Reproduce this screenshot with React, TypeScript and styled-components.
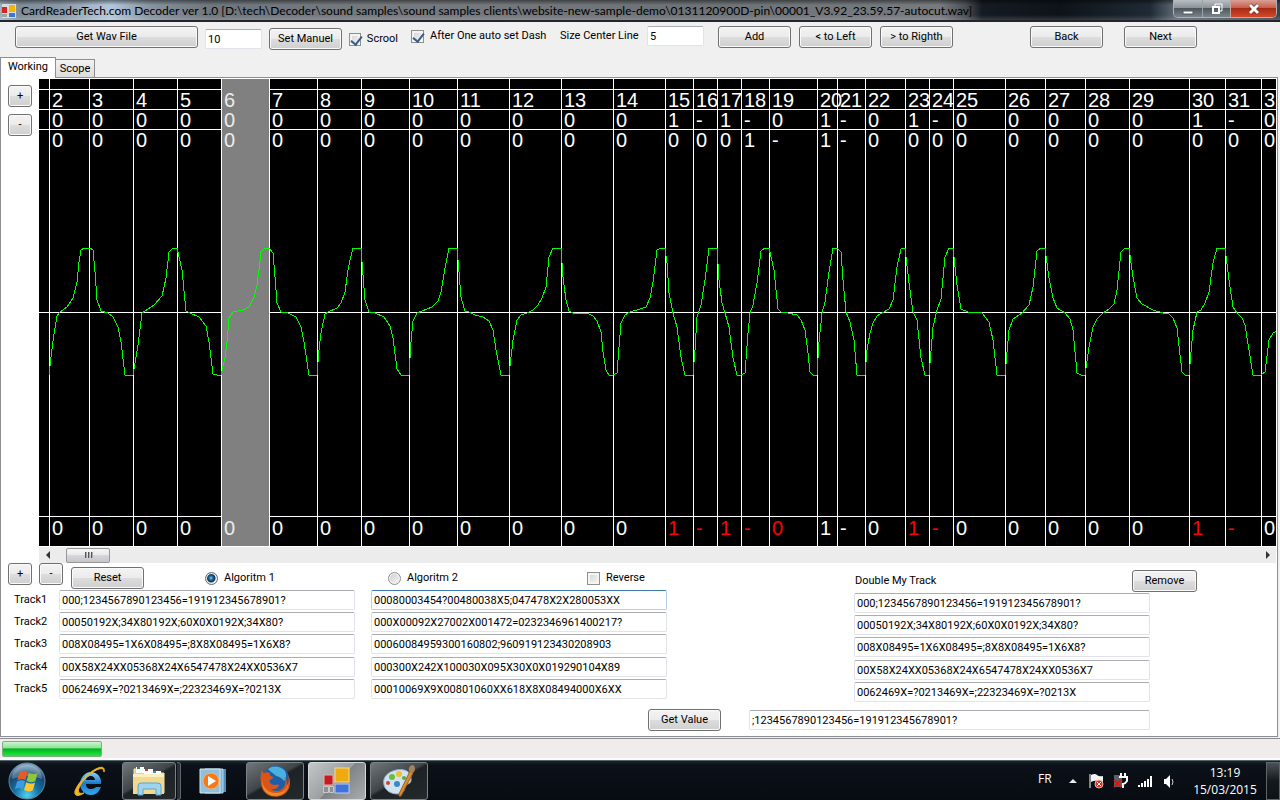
import React, { useState } from "react";
import styled, { createGlobalStyle, css } from "styled-components";

const GlobalStyle = createGlobalStyle`
  * { box-sizing: border-box; }
  body {
    margin: 0;
    background: #f0f0f0;
    color: #000;
    font: 11px/14px Roboto, "Liberation Sans", sans-serif;
  }
  button, input { font: inherit; color: inherit; margin: 0; }
`;

const Desktop = styled.div`
  display: flex;
  flex-direction: column;
  min-height: 100vh;
  overflow: hidden;
`;

/* ---------- title bar ---------- */

const TitleBar = styled.header`
  display: flex;
  align-items: flex-start;
  height: 22px;
  padding: 0 3px 0 2px;
  border-bottom: 2px solid #22262c;
  background:
    linear-gradient(180deg, rgba(0, 0, 0, 0.45) 0, rgba(0, 0, 0, 0) 5px, rgba(0, 0, 0, 0) 15px, rgba(255, 255, 255, 0.15) 20px),
    linear-gradient(90deg, #9fb2c4 0, #7f8c98 20px, #8b99a6 60px, #b4c8dc 110px, #8793a0 150px, #6f767d 210px, #767a7e 420px, #6d7276 700px, #777b7f 940px, #4a4f54 966px, #151b22 982px, #0d1319 1060px, #1f2a35 1150px, #5c6872 1175px, #39434c 100%);
`;

const AppIcon = styled.svg`
  flex: none;
  margin-top: 4px;
`;

const Title = styled.h1`
  flex: 1;
  margin: 0;
  padding: 2px 0 0 5px;
  overflow: hidden;
  white-space: nowrap;
  font: 400 12px/17px Lato, sans-serif;
`;

const Captions = styled.div`
  display: flex;
  height: 18px;
  border: 1px solid #aab2b8;
  border-top: 0;
  border-radius: 0 0 5px 5px;
  overflow: hidden;
`;

const CaptionButton = styled.button<{ $close?: boolean }>`
  display: grid;
  place-items: center;
  width: ${(p) => (p.$close ? 46 : 28)}px;
  padding: 0;
  border: 0;
  border-left: ${(p) => (p.$close ? "1px solid #c9a39c" : "1px solid #9aa2a8")};
  background: ${(p) =>
    p.$close
      ? "linear-gradient(180deg, #d9a096 0, #c5604e 45%, #a82a15 50%, #d4492a 100%)"
      : "linear-gradient(180deg, #b9bec2 0, #8c9399 45%, #50585f 50%, #7b848b 100%)"};
  &:first-child { border-left: 0; }
`;

/* ---------- shared controls ---------- */

const Button = styled.button<{ $w: number }>`
  flex: none;
  width: ${(p) => p.$w}px;
  height: 22px;
  padding: 0;
  border: 1px solid #707070;
  border-radius: 3px;
  background: linear-gradient(180deg, #f3f3f3 0, #ebebeb 50%, #dddddd 50%, #cfcfcf 100%);
  box-shadow: inset 0 0 0 1px #fafafa;
  white-space: nowrap;
`;

const TextBox = styled.input<{ $w: number; $focus?: boolean }>`
  flex: none;
  width: ${(p) => p.$w}px;
  height: 20px;
  padding: 0 2px;
  border: 1px solid #e2e3ea;
  border-top-color: #abadb3;
  border-radius: 2px;
  outline: 0;
  background: #fff;
  ${(p) =>
    p.$focus &&
    css`
      border-color: #b5cfe7;
      border-top-color: #3d7bad;
    `}
`;

const Choice = styled.label<{ $w?: number }>`
  display: flex;
  align-items: center;
  gap: 6px;
  width: ${(p) => (p.$w ? `${p.$w}px` : "auto")};
  white-space: nowrap;
`;

const CheckBox = styled.input.attrs({ type: "checkbox" })`
  appearance: none;
  position: relative;
  width: 13px;
  height: 13px;
  border: 1px solid #8e8f8f;
  background: linear-gradient(135deg, #cfd3d6, #f6f6f6);
  box-shadow: inset 0 0 0 2px #f4f4f4;
  &:checked::after {
    content: "";
    position: absolute;
    left: 3px;
    top: 0;
    width: 5px;
    height: 9px;
    border: solid #3b5c86;
    border-width: 0 2px 2px 0;
    transform: rotate(38deg);
  }
`;

const Radio = styled.input.attrs({ type: "radio" })`
  appearance: none;
  width: 13px;
  height: 13px;
  border: 1px solid #8e8f8f;
  border-radius: 50%;
  background: linear-gradient(135deg, #c9cdd0, #f6f6f6);
  box-shadow: inset 0 0 0 1px #f4f4f4;
  &:checked {
    border-color: #5f6a74;
    background: radial-gradient(circle at 5px 5px, #7fd0f0 0, #1b6a9c 2px, #0d3250 4px, #dfe6ea 5px);
  }
`;

/* ---------- toolbar ---------- */

const Toolbar = styled.div`
  display: flex;
  align-items: flex-start;
  height: 35px;
  padding: 4px 83px 0 15px;
`;

const ToolGroup = styled.div<{ $gap: number; $left?: number; $low?: boolean }>`
  display: flex;
  align-items: center;
  gap: ${(p) => p.$gap}px;
  margin-left: ${(p) => p.$left ?? 0}px;
  padding-top: ${(p) => (p.$low ? 2 : 0)}px;
`;

const Nav = styled(ToolGroup)`
  margin-left: auto;
`;

const Labelled = styled.label`
  display: grid;
  grid-template-columns: 87px auto;
  align-items: center;
  white-space: nowrap;
`;

/* ---------- tabs ---------- */

const TabStrip = styled.div`
  display: flex;
  align-items: flex-end;
  height: 20px;
`;

const Tab = styled.button<{ $active?: boolean }>`
  position: relative;
  height: ${(p) => (p.$active ? 21 : 18)}px;
  width: ${(p) => (p.$active ? 56 : 39)}px;
  padding: ${(p) => (p.$active ? "0 0 2px" : "1px 0 0")};
  margin-bottom: ${(p) => (p.$active ? -1 : 0)}px;
  border: 1px solid #8c8e94;
  border-bottom: 0;
  border-left-width: ${(p) => (p.$active ? 1 : 0)}px;
  background: ${(p) => (p.$active ? "#fff" : "linear-gradient(180deg, #f2f2f2, #dcdcdc)")};
  z-index: ${(p) => (p.$active ? 1 : 0)};
`;

const TabPage = styled.main`
  flex: 1;
  display: flex;
  flex-direction: column;
  margin-right: 2px;
  border: 1px solid #8c8e94;
  background: #fff;
`;

const ScopeArea = styled.section`
  display: flex;
  height: 485px;
`;

const ZoomColumn = styled.div`
  flex: none;
  display: flex;
  flex-direction: column;
  gap: 7px;
  width: 38px;
  padding: 7px 0 0 7px;
`;

const Viewport = styled.div`
  flex: 1;
  min-width: 0;
  padding: 1px 1px 0 0;
`;

const Trace = styled.svg`
  display: block;
  width: 100%;
  height: 468px;
  background: #000;
  font: 20px "Liberation Sans", Arial, sans-serif;
  fill: #fff;
`;

const ScrollBar = styled.div`
  display: flex;
  align-items: center;
  height: 16px;
  background: #ececec;
`;

const ScrollArrow = styled.button`
  display: grid;
  place-items: center;
  width: 17px;
  height: 15px;
  padding: 0;
  border: 0;
  background: transparent;
`;

const ScrollTrack = styled.div`
  flex: 1;
  padding-left: 10px;
`;

const Thumb = styled.div`
  display: flex;
  align-items: center;
  justify-content: center;
  gap: 2px;
  width: 44px;
  height: 15px;
  border: 1px solid #979797;
  border-radius: 2px;
  background: linear-gradient(180deg, #f5f5f5 0, #e9e9eb 50%, #d6d7da 50%, #c5c6c9 100%);
  i { width: 1px; height: 6px; background: #555; box-shadow: 1px 0 #aaa; }
`;

/* ---------- decoded tracks ---------- */

const Results = styled.section`
  display: flex;
`;

const LeftPane = styled.div`
  flex: 1;
  padding-left: 7px;
`;

const RightPane = styled.div`
  flex: none;
  width: 423px;
`;

const Controls = styled.div`
  display: flex;
  height: 27px;
  align-items: flex-start;
`;

const ZoomPair = styled.div`
  display: flex;
  gap: 7px;
  width: 63px;
`;

const Slot = styled.div<{ $w: number }>`
  display: flex;
  align-items: center;
  width: ${(p) => p.$w}px;
  height: 30px;
`;

const TrackGrid = styled.div`
  display: grid;
  grid-template-columns: 45px 296px 296px;
  grid-template-rows: 20px 20px 20px 21px 20px;
  row-gap: 2px;
  align-items: end;
  padding-left: 6px;
  > label { align-self: center; }
  > :nth-child(3n) { margin-left: 16px; }
`;

const DoubleHead = styled.div`
  display: flex;
  justify-content: space-between;
  align-items: center;
  height: 30px;
  padding: 6px 80px 0 1px;
`;

const DoubleList = styled.div`
  display: grid;
  grid-template-rows: 20px 20px 20px 21px 20px;
  row-gap: 2px;
  align-items: end;
`;

const ValueRow = styled.form`
  display: flex;
  justify-content: flex-end;
  align-items: center;
  gap: 28px;
  margin-top: 7px;
  padding: 0 127px 5px 0;
`;

const StatusBar = styled.footer`
  height: 22px;
  margin-top: 1px;
  padding: 2px;
  border-top: 1px solid #8c8e94;
  border-bottom: 2px solid #fafafa;
  background: #f0eceb;
`;

const Progress = styled.div`
  width: 100px;
  height: 16px;
  border: 1px solid #7fae86;
  border-radius: 2px;
  background: linear-gradient(180deg, #c9f5cf 0, #8fe59a 40%, #06b125 50%, #0dd22b 75%, #2fdf4c 100%);
`;

/* ---------- taskbar ---------- */

const Taskbar = styled.nav`
  display: flex;
  align-items: center;
  height: 40px;
  padding-left: 5px;
  border-top: 1px solid #55636a;
  background: linear-gradient(180deg, #1b242c 0, #0b1118 4px, #080c12 100%);
  color: #fff;
  font: 12px/17px "Open Sans", sans-serif;
`;

const TaskItem = styled.button<{ $w: number; $left: number; $look?: "open" | "active" }>`
  display: grid;
  place-items: center;
  width: ${(p) => p.$w}px;
  height: 38px;
  margin-left: ${(p) => p.$left}px;
  padding: 0;
  border: 0;
  background: transparent;
  ${(p) =>
    p.$look &&
    css`
      border: 1px solid ${p.$look === "active" ? "#d5d8da" : "#7c8387"};
      border-radius: 3px;
      background: ${p.$look === "active"
        ? "linear-gradient(135deg, #c4c7c8 0, #9b9fa1 50%, #7e8385 51%, #a9acae 100%)"
        : "linear-gradient(150deg, #70767a 0, #3f4549 45%, #1c2225 50%, #24292c 100%)"};
    `}
`;

const Stack = styled.div`
  width: 4px;
  height: 38px;
  margin-left: 1px;
  border: 1px solid #5f6568;
  border-left: 0;
  border-radius: 0 3px 3px 0;
  background: #2a2f33;
`;

const Tray = styled.div`
  display: flex;
  align-items: center;
  margin-left: auto;
`;

const Lang = styled.span`
  width: 30px;
  padding-bottom: 4px;
`;

const TrayIcons = styled.svg`
  display: block;
`;

const Clock = styled.time`
  width: 82px;
  text-align: center;
`;

const ShowDesktop = styled.button`
  width: 14px;
  height: 38px;
  padding: 0;
  border: 1px solid #5e666b;
  background: linear-gradient(180deg, #4a5055, #14191d 50%, #0d1216);
`;

/* ---------- data ---------- */

type Cell = { x: number; n: number; a: string; b: string; out: string; hot?: boolean };

const xs = [10, 50, 94, 138, 182, 230, 278, 322, 370, 418, 470, 522, 574, 626, 654, 678, 702, 730, 778, 798, 826, 866, 890, 914, 966, 1006, 1046, 1090, 1150, 1186, 1222];
const rowA = "00000000000001-1-01-01-000001-0";
const rowB = "00000000000000001-1-00000000000";
const hotColumns = [15, 16, 17, 18, 19, 23, 24, 30, 31];

const cells: Cell[] = xs.map((x, i) => ({
  x,
  n: i + 2,
  a: rowA[i],
  b: rowB[i],
  out: rowA[i],
  hot: hotColumns.includes(i + 2),
}));

const selected = 6;

const wave =
  "49,375 52,349 54,334 57,316 60,312 67,307 73,298 77,282 79,262 81,250 84,248 90,248 93,250 95,272 97,300 101,311 108,313 113,317 118,327 121,342 125,375 133,375 138,345 142,313 145,311 154,305 162,296 166,278 169,252 173,248 177,248 182,270 186,311 190,313 199,317 206,326 209,342 213,374 217,375 221,375 225,358 227,342 229,318 233,312 243,310 249,307 254,297 257,285 259,270 261,252 265,248 269,248 273,253 275,277 277,303 281,312 288,313 296,317 301,327 304,342 309,375 317,375 319,350 321,333 325,314 328,312 337,308 341,303 345,292 348,270 350,260 353,248 361,248 363,275 365,300 369,312 375,313 384,317 390,326 393,338 397,369 401,375 409,375 411,342 413,321 417,313 432,307 438,301 441,292 445,268 449,248 457,248 459,272 461,297 465,311 469,312 475,315 483,317 489,321 493,330 496,350 501,375 509,375 513,340 517,320 521,315 527,313 533,310 538,305 542,298 546,287 549,257 553,248 561,248 563,277 566,300 569,311 573,313 587,313 593,316 597,321 601,332 603,352 606,370 609,375 613,375 617,373 619,347 621,323 625,315 630,312 640,309 646,307 650,298 653,282 657,250 661,248 665,248 667,263 669,293 673,313 677,327 681,357 685,375 693,375 695,350 697,317 701,305 705,280 709,248 717,248 719,280 722,303 725,313 729,327 733,358 737,375 741,375 745,373 748,333 750,313 753,305 757,283 761,251 765,248 769,248 774,270 778,309 781,312 788,313 797,315 801,320 805,330 808,353 810,372 813,375 817,375 819,342 822,313 825,302 829,272 833,248 837,248 841,252 843,280 846,312 850,322 854,340 857,375 865,375 867,350 870,333 873,323 877,316 882,313 889,309 893,300 897,267 901,249 905,248 909,283 913,312 917,320 921,358 925,375 929,375 933,327 937,310 941,299 945,257 949,248 953,248 957,285 961,309 968,312 982,313 989,322 993,340 997,375 1005,375 1009,330 1013,319 1022,313 1029,305 1033,287 1037,251 1041,248 1045,248 1049,278 1053,298 1057,308 1065,313 1070,319 1073,330 1077,373 1081,375 1085,375 1089,347 1093,327 1097,319 1103,313 1109,309 1114,304 1117,290 1121,252 1125,248 1129,248 1133,277 1137,298 1142,304 1153,310 1163,313 1169,314 1173,318 1177,328 1182,372 1185,375 1189,375 1193,330 1197,312 1201,310 1205,303 1209,292 1213,263 1217,248 1225,248 1229,280 1233,307 1237,313 1242,318 1245,325 1249,350 1253,375 1261,375 1265,372 1269,340 1273,333 1277,331";

const algo1 = [
  "000;1234567890123456=191912345678901?",
  "00050192X;34X80192X;60X0X0192X;34X80?",
  "008X08495=1X6X08495=;8X8X08495=1X6X8?",
  "00X58X24XX05368X24X6547478X24XX0536X7",
  "0062469X=?0213469X=;22323469X=?0213X",
];

const algo2 = [
  "00080003454?00480038X5;047478X2X280053XX",
  "000X00092X27002X001472=0232346961400217?",
  "00060084959300160802;960919123430208903",
  "000300X242X100030X095X30X0X019290104X89",
  "00010069X9X00801060XX618X8X08494000X6XX",
];

/* ---------- pieces ---------- */

function Waveform() {
  return (
    <Trace role="img" aria-label="Waveform">
      <g shapeRendering="crispEdges">
        {[10, 30, 50, 233, 437, 467].map((y) => (
          <rect key={y} x="0" y={y} width="100%" height="1" />
        ))}
        {cells.map((c) => (
          <rect key={c.n} x={c.x} y="0" width="1" height="468" />
        ))}
        <rect x="183" y="0" width="47" height="467" fill="#808080" />
        <polyline points={wave} transform="translate(-39 -79)" fill="none" stroke="#00ff00" />
      </g>
      {cells.map((c) => (
        <g key={c.n} fill={c.n === selected ? "#ececec" : "#fff"}>
          <text x={c.x + 3} y="28">{c.n}</text>
          <text x={c.x + 3} y="48">{c.a}</text>
          <text x={c.x + 3} y="68">{c.b}</text>
          <text x={c.x + 3} y="456" fill={c.hot ? "#f00" : undefined}>{c.out}</text>
        </g>
      ))}
    </Trace>
  );
}

function FormsIcon({ size }: { size: number }) {
  return (
    <svg width={size} height={size} viewBox="0 0 28 28" aria-hidden="true">
      <path d="M.5 19.500h5v6h-5zM6.500 19.500h4v6h-4z" fill="#8d9092" stroke="#c6c9cb" />
      <rect x="1" y="8" width="9" height="10" fill="#c41d20" stroke="#eab0a8" />
      <rect x="12" y="1" width="14" height="14" fill="#eeaa10" stroke="#f8dc8a" />
      <rect x="12" y="17" width="14" height="9" fill="#3f73d8" stroke="#b7cdf5" />
    </svg>
  );
}

function SmallFormsIcon() {
  return (
    <AppIcon width="14" height="14" viewBox="0 0 14 14" aria-hidden="true">
      <rect width="14" height="14" fill="#d8dcdf" />
      <rect x="0" y="3" width="5" height="6" fill="#d0281e" />
      <rect x="7" y="1" width="6" height="7" fill="#f5b400" />
      <rect x="7" y="9" width="6" height="4" fill="#3a78dc" />
      <path d="M0 10h5v3H0z" fill="#9ea3a7" />
    </AppIcon>
  );
}

function StartOrb() {
  return (
    <svg width="38" height="38" viewBox="0 0 38 38" aria-hidden="true">
      <defs>
        <radialGradient id="orb" cx="50%" cy="90%" r="85%">
          <stop offset="0" stopColor="#4fd4f2" />
          <stop offset=".4" stopColor="#1572a8" />
          <stop offset=".75" stopColor="#17466f" />
          <stop offset="1" stopColor="#7fa3bd" />
        </radialGradient>
      </defs>
      <circle cx="19" cy="19" r="18" fill="url(#orb)" stroke="#64869c" />
      <path d="M4 17C4 8 11 3 19 3s15 5 15 14c-9-4-20-4-30 0z" fill="#fff" opacity=".25" />
      <path d="M11.500 10.500c3-2 5.500-2 8-.5l-2.200 8c-2.500-1.500-5.300-1.500-8 .3z" fill="#ea5a24" />
      <path d="M20.800 10.700c3 1.800 6 1.800 8.800.2l-2.200 8c-2.800 1.700-5.800 1.700-8.800-.2z" fill="#8fc43c" />
      <path d="M9 19.700c2.800-1.800 5.500-1.800 8-.3l-2.200 7.800c-2.400-1.600-5.200-1.600-8 .2z" fill="#3f9be0" />
      <path d="M18.200 20.200c3 1.800 6 1.800 8.900.2l-2.200 7.800c-2.900 1.700-5.900 1.700-8.900-.2z" fill="#fbc72c" />
    </svg>
  );
}

function ExplorerE() {
  return (
    <svg width="34" height="34" viewBox="0 0 34 34" aria-hidden="true">
      <defs>
        <linearGradient id="ie" x1="0" y1="0" x2="0" y2="1">
          <stop offset="0" stopColor="#8bd5fa" />
          <stop offset=".5" stopColor="#1c78cc" />
          <stop offset="1" stopColor="#3aa7ee" />
        </linearGradient>
      </defs>
      <path d="M29 20H14c0 3 2 5 5 5 2 0 4-1 5-2h5c-2 5-5 8-10 8-6 0-11-5-11-11S13 8 19 8s11 5 10 12zM14 16h9c0-2-2-4-4-4s-5 2-5 4z" fill="url(#ie)" />
      <path d="M32 8c1-4-1-6-6-4C18 7 6 18 3 27c-1 5 3 6 9 2C8 30 5 29 7 24 10 16 20 7 27 5c3-1 5 0 5 3z" fill="#f0b323" stroke="#f0b323" />
    </svg>
  );
}

function FolderIcon() {
  return (
    <svg width="34" height="32" viewBox="0 0 34 32" aria-hidden="true">
      <path d="M2 4h8l2 2h8l2 2h10v20H2z" fill="#e7cf7a" stroke="#f7ebb4" />
      <path d="M4 2h8v6H4z" fill="#fff" /><path d="M5 2h3v2H5z" fill="#1c9b3c" />
      <path d="M12 4h9v6h-9z" fill="#fff" /><path d="M13 4h3v2h-3z" fill="#d63a24" />
      <path d="M20 6h9v6h-9z" fill="#fff" /><path d="M21 6h3v2h-3z" fill="#2497e0" />
      <path d="M1 9h31v20H1z" fill="#f0da90" />
      <path d="M1 9h31v3H1z" fill="#fbefc0" />
      <path d="M6 30V21q0-3 3-3h17q3 0 3 3v9h-5v-6H11v6z" fill="#9fd3ee" stroke="#5ca6cf" />
    </svg>
  );
}

function PlayerIcon() {
  return (
    <svg width="28" height="28" viewBox="0 0 28 28" aria-hidden="true">
      <path d="M9 2h18v23H9z" fill="#4d8fb8" /><path d="M6 2h18v24H6z" fill="#7fb4d6" stroke="#b7d9ec" />
      <path d="M1 2h20v24H1z" fill="#8fc1de" stroke="#cfe7f4" />
      <circle cx="12" cy="14" r="8" fill="#f27a1a" stroke="#fbb26a" />
      <path d="M9 9l8 5-8 5z" fill="#fff" />
    </svg>
  );
}

function FirefoxIcon() {
  return (
    <svg width="32" height="32" viewBox="0 0 32 32" aria-hidden="true">
      <circle cx="17" cy="14" r="13" fill="#1d5ea8" />
      <path d="M9 4c5-4 13-3 17 2 2 4 1 8-1 10-3-5-8-4-10-7-2-1-4-3-6-5z" fill="#4ab0dd" />
      <path d="M3 4c0 2 1 4 2 4 2-1 4-1 6 0-1 2 0 3 3 4 1 1-1 2-3 3-1 1 0 5 4 5 2 0 4-1 5 0-1 4-5 5-8 4 4 4 12 2 14-4 1-3 0-6-1-8 3 2 3 5 3 8 2-3 2-6 1-10 4 7 2 16-5 20-8 4-18 1-21-7C1 17 1 11 3 4z" fill="#d9541a" />
      <path d="M3 14c0 8 6 14 14 14 6 0 11-3 12-9 1 6-6 12-13 12C8 31 2 24 3 14z" fill="#f08a24" />
    </svg>
  );
}

function PaintIcon() {
  return (
    <svg width="34" height="34" viewBox="0 0 34 34" aria-hidden="true">
      <path d="M14 6c9-2 16 2 15 10 0 4-4 4-6 5-3 1 1 4-2 7-4 4-17 2-19-7C0 13 6 8 14 6z" fill="#cfe3f0" stroke="#8fb0c6" />
      <circle cx="10" cy="13" r="3" fill="#6dbb3a" /><circle cx="17" cy="10" r="3" fill="#f0bf2c" />
      <circle cx="6" cy="19" r="2" fill="#d9402c" /><circle cx="15" cy="20" r="3" fill="#3f86c8" />
      <circle cx="22" cy="14" r="2" fill="#58a94c" />
      <path d="M28 7l3 2-12 23q-3 1-2-2z" fill="#d98a35" stroke="#a35f1c" />
      <path d="M27 7c-1-3 1-6 4-6 2 1 3 5 0 8z" fill="#a5835a" />
    </svg>
  );
}

function TrayGlyphs() {
  return (
    <TrayIcons width="116" height="20" viewBox="0 0 116 20" aria-hidden="true">
      <path d="M1 12h8l-4-4z" fill="#e8ecee" />
      <path d="M22 3v14" stroke="#fff" />
      <path d="M23 4q4-2 6 0t6 1v6q-4 0-6-1t-6 1z" fill="#f4f4f4" />
      <circle cx="31" cy="13" r="4" fill="#d9341f" stroke="#f3b0a6" />
      <path d="M29 11l4 4m0-4l-4 4" stroke="#fff" />
      <path d="M46 4h8v12h-8z" fill="#5b6165" />
      <path d="M53 2v4m4-4v4m-6 0h8v4q-2 3-4 3v4" stroke="#fff" strokeWidth="2" fill="none" />
      <path d="M46 9l7 7m0-7l-7 7" stroke="#e01212" strokeWidth="2" />
      <path d="M70 14h2v2h-2zM73 12h2v4h-2zM76 10h2v6h-2zM79 8h2v8h-2zM82 5h2v11h-2z" fill="#fff" />
      <path d="M96 8h2l4-4v13l-4-4h-2z" fill="#fff" />
      <path d="M104 8q2 3 0 6" stroke="#ccd" fill="none" />
    </TrayIcons>
  );
}

export default function App() {
  const [algorithm, setAlgorithm] = useState(1);
  return (
    <Desktop>
      <GlobalStyle />
      <TitleBar>
        <SmallFormsIcon />
        <Title>
          CardReaderTech.com Decoder ver 1.0 [D:\tech\Decoder\sound samples\sound samples clients\website-new-sample-demo\0131120900D-pin\00001_V3.92_23.59.57-autocut.wav]
        </Title>
        <Captions>
          <CaptionButton aria-label="Minimize">
            <svg width="12" height="14"><rect x="1" y="9" width="10" height="3" fill="#fff" stroke="#555b60" strokeWidth="1" /></svg>
          </CaptionButton>
          <CaptionButton aria-label="Restore">
            <svg width="12" height="14" fill="none" stroke="#fff" strokeWidth="2"><path d="M4 4V2h7v7H9" strokeWidth="1" /><rect x="2" y="5" width="6" height="6" /></svg>
          </CaptionButton>
          <CaptionButton $close aria-label="Close">
            <svg width="12" height="12"><path d="M2 2l8 8m0-8l-8 8" stroke="#5b2018" strokeWidth="4" /><path d="M2 2l8 8m0-8l-8 8" stroke="#fff" strokeWidth="3" /></svg>
          </CaptionButton>
        </Captions>
      </TitleBar>

      <Toolbar>
        <Button $w={183}>Get Wav File</Button>
        <ToolGroup $gap={7} $left={7} $low>
          <TextBox $w={57} defaultValue="10" aria-label="Manual value" />
          <Button $w={73}>Set Manuel</Button>
          <Choice $w={49}><CheckBox defaultChecked />Scrool</Choice>
        </ToolGroup>
        <ToolGroup $gap={0} $left={13}>
          <Choice $w={149}><CheckBox defaultChecked />After One auto set Dash</Choice>
          <Labelled>Size Center Line<TextBox $w={57} defaultValue="5" /></Labelled>
        </ToolGroup>
        <ToolGroup $gap={8} $left={14}>
          <Button $w={73}>Add</Button>
          <Button $w={73}>&lt; to Left</Button>
          <Button $w={73}>&gt; to Righth</Button>
        </ToolGroup>
        <Nav $gap={21}>
          <Button $w={73}>Back</Button>
          <Button $w={73}>Next</Button>
        </Nav>
      </Toolbar>

      <TabStrip role="tablist">
        <Tab role="tab" aria-selected $active>Working</Tab>
        <Tab role="tab" aria-selected={false}>Scope</Tab>
      </TabStrip>

      <TabPage>
        <ScopeArea>
          <ZoomColumn>
            <Button $w={24}>+</Button>
            <Button $w={24}>-</Button>
          </ZoomColumn>
          <Viewport>
            <Waveform />
            <ScrollBar>
              <ScrollArrow aria-label="Scroll left"><svg width="4" height="8"><path d="M4 0v8L0 4z" fill="#333" /></svg></ScrollArrow>
              <ScrollTrack><Thumb><i /><i /><i /></Thumb></ScrollTrack>
              <ScrollArrow aria-label="Scroll right"><svg width="4" height="8"><path d="M0 0v8l4-4z" fill="#333" /></svg></ScrollArrow>
            </ScrollBar>
          </Viewport>
        </ScopeArea>

        <Results>
          <LeftPane>
            <Controls>
              <ZoomPair>
                <Button $w={24}>+</Button>
                <Button $w={24}>-</Button>
              </ZoomPair>
              <Slot $w={134}><Button $w={73}>Reset</Button></Slot>
              <Slot $w={183}>
                <Choice><Radio name="algorithm" checked={algorithm === 1} onChange={() => setAlgorithm(1)} />Algoritm 1</Choice>
              </Slot>
              <Slot $w={199}>
                <Choice><Radio name="algorithm" checked={algorithm === 2} onChange={() => setAlgorithm(2)} />Algoritm 2</Choice>
              </Slot>
              <Slot $w={80}>
                <Choice><CheckBox />Reverse</Choice>
              </Slot>
            </Controls>
            <TrackGrid>
              {algo1.map((value, i) => (
                <React.Fragment key={value}>
                  <label htmlFor={`track${i + 1}`}>Track{i + 1}</label>
                  <TextBox id={`track${i + 1}`} $w={296} defaultValue={value} />
                  <TextBox $w={296} $focus={i === 0} defaultValue={algo2[i]} aria-label={`Track${i + 1}, second algorithm`} />
                </React.Fragment>
              ))}
            </TrackGrid>
          </LeftPane>
          <RightPane>
            <DoubleHead>
              <span>Double My Track</span>
              <Button $w={65}>Remove</Button>
            </DoubleHead>
            <DoubleList>
              {algo1.map((value, i) => (
                <TextBox key={value} $w={296} defaultValue={value} aria-label={`Double track ${i + 1}`} />
              ))}
            </DoubleList>
          </RightPane>
        </Results>
        <ValueRow onSubmit={(e) => e.preventDefault()}>
          <Button $w={73}>Get Value</Button>
          <TextBox $w={401} defaultValue=";1234567890123456=191912345678901?" aria-label="Value" />
        </ValueRow>
      </TabPage>

      <StatusBar>
        <Progress role="progressbar" aria-label="Decoding" aria-valuenow={100} />
      </StatusBar>

      <Taskbar>
        <TaskItem $w={44} $left={0} aria-label="Start"><StartOrb /></TaskItem>
        <TaskItem $w={48} $left={16} aria-label="Internet Explorer"><ExplorerE /></TaskItem>
        <TaskItem $w={54} $left={9} $look="open" aria-label="Explorer"><FolderIcon /></TaskItem>
        <Stack />
        <TaskItem $w={48} $left={8} aria-label="Media Player"><PlayerIcon /></TaskItem>
        <TaskItem $w={58} $left={9} $look="open" aria-label="Firefox"><FirefoxIcon /></TaskItem>
        <TaskItem $w={58} $left={4} $look="active" aria-label="Decoder"><FormsIcon size={28} /></TaskItem>
        <TaskItem $w={58} $left={4} $look="open" aria-label="Paint"><PaintIcon /></TaskItem>
        <Tray>
          <Lang>FR</Lang>
          <TrayGlyphs />
          <Clock>13:19<br />15/03/2015</Clock>
          <ShowDesktop aria-label="Show desktop" />
        </Tray>
      </Taskbar>
    </Desktop>
  );
}
